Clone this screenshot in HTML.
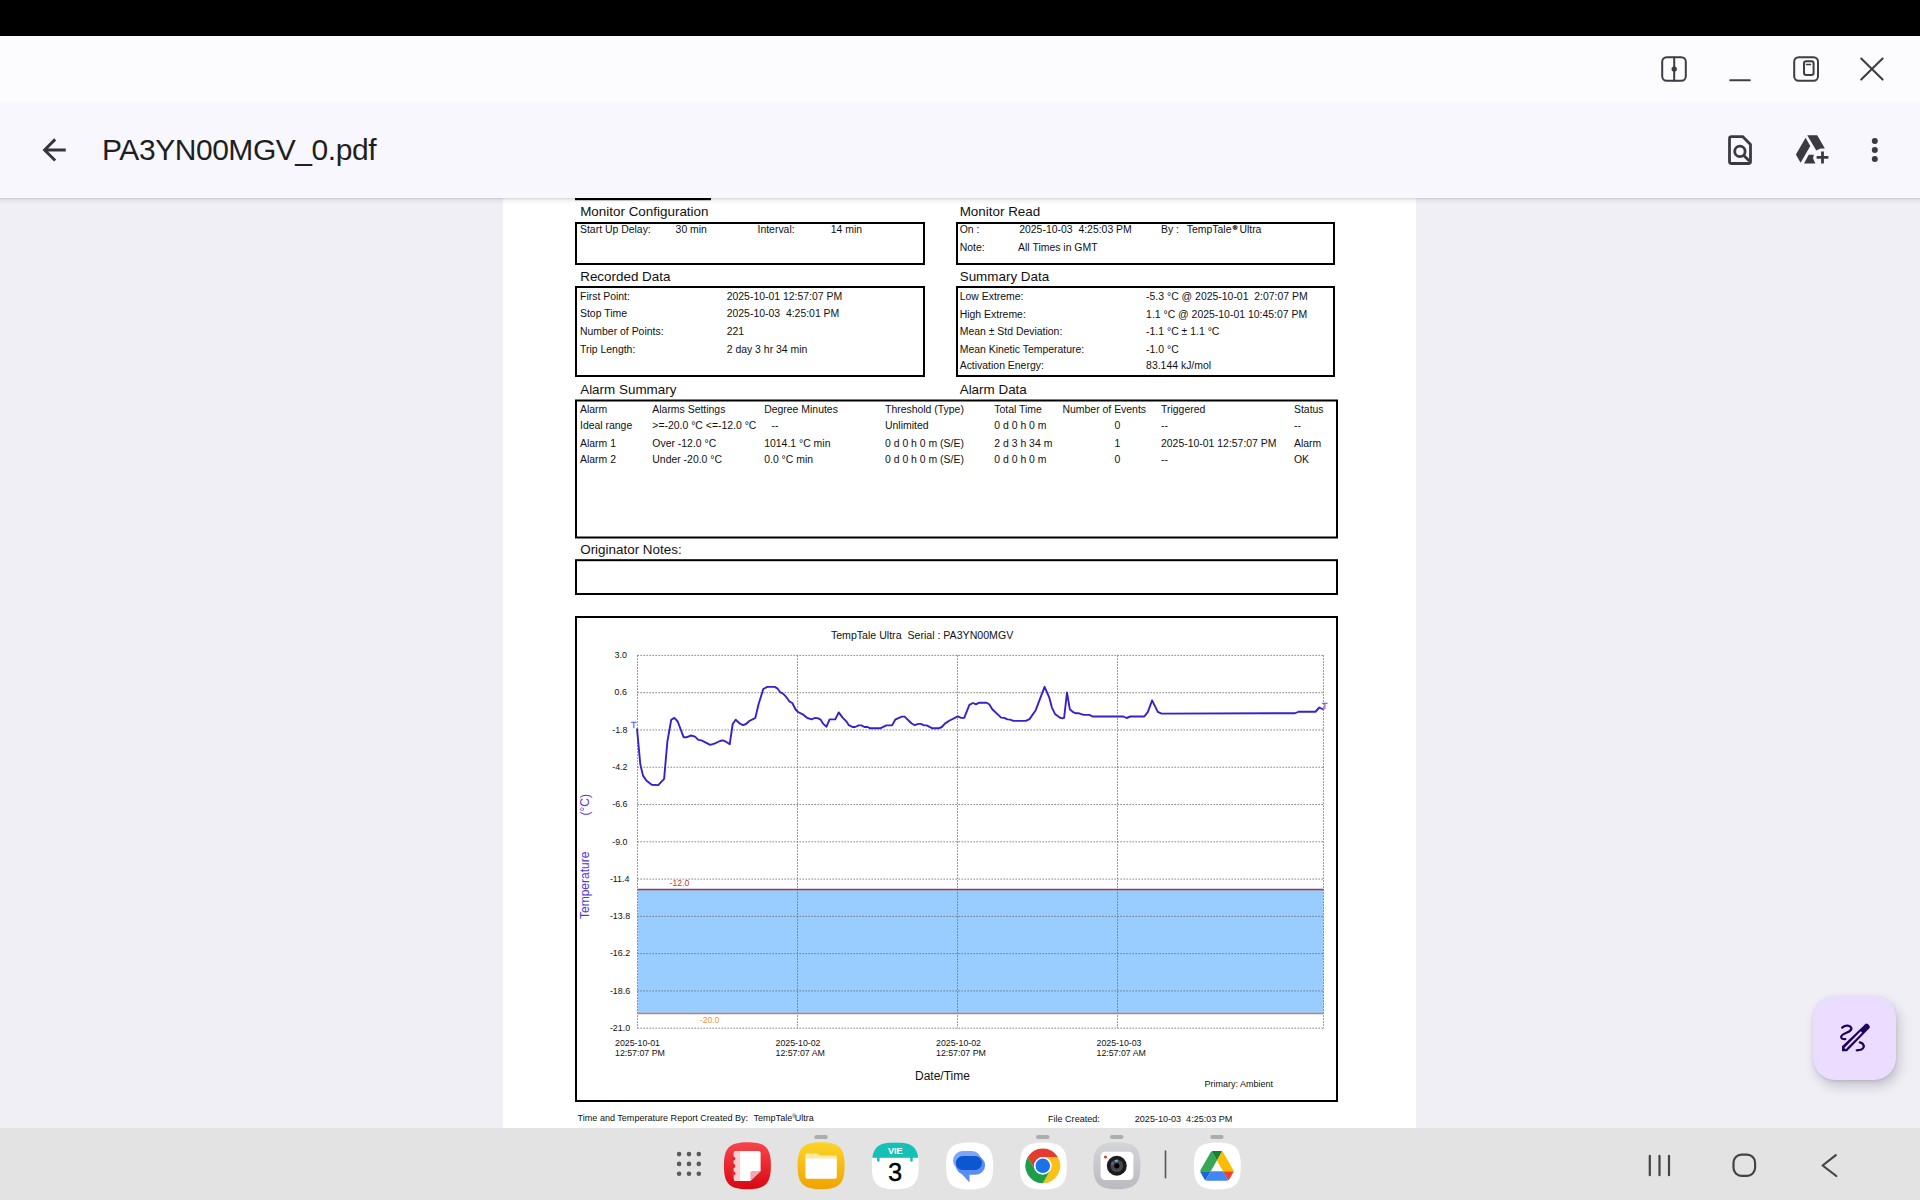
<!DOCTYPE html>
<html><head><meta charset="utf-8">
<style>
html,body{margin:0;padding:0;}
body{width:1920px;height:1200px;overflow:hidden;position:relative;background:#F0EFF5;font-family:"Liberation Sans",sans-serif;}
.abs{position:absolute;}
#status{left:0;top:0;width:1920px;height:36px;background:#000;}
#winbar{left:0;top:36px;width:1920px;height:66px;background:#FCFCFE;}
#appbar{left:0;top:102px;width:1920px;height:96px;background:#F8F7FD;}
#shadow{left:0;top:198px;width:1920px;height:6px;background:linear-gradient(rgba(50,50,70,0.20),rgba(50,50,70,0.07) 35%,rgba(50,50,70,0));}
#page{left:503px;top:198px;width:913px;height:930px;background:#fff;}
#taskbar{left:0;top:1128px;width:1920px;height:72px;background:#E3E3E3;}
#title{left:102px;top:133px;font-size:30px;line-height:normal;color:#1F1F1F;white-space:nowrap;letter-spacing:-0.45px;}
#fab{left:1813px;top:996px;width:83px;height:84px;border-radius:22px;background:#EADDFF;box-shadow:3px 6px 12px rgba(40,30,60,0.22),0 1px 3px rgba(0,0,0,0.10);}
svg{position:absolute;overflow:visible;}
</style></head>
<body>
<div id="status" class="abs"></div>
<div id="winbar" class="abs"></div>
<div id="appbar" class="abs"></div>
<div id="page" class="abs"></div>
<div id="shadow" class="abs"></div>
<div id="taskbar" class="abs"></div>
<div id="title" class="abs">PA3YN00MGV_0.pdf</div>
<div id="fab" class="abs"></div>
<svg class="abs" style="left:0;top:0" width="1920" height="1200" viewBox="0 0 1920 1200">
<g font-family='"Liberation Sans",sans-serif' fill="#111">
<rect x="575" y="198" width="136" height="2.2" fill="#000"/>
<text x="580.2" y="215.8" font-size="13.43"  xml:space="preserve">Monitor Configuration</text>
<text x="959.7" y="215.8" font-size="13.43"  xml:space="preserve">Monitor Read</text>
<text x="580.2" y="281" font-size="13.43"  xml:space="preserve">Recorded Data</text>
<text x="959.7" y="280.8" font-size="13.43"  xml:space="preserve">Summary Data</text>
<text x="580.2" y="394" font-size="13.43"  xml:space="preserve">Alarm Summary</text>
<text x="959.7" y="394" font-size="13.43"  xml:space="preserve">Alarm Data</text>
<text x="580.2" y="554" font-size="13.43"  xml:space="preserve">Originator Notes:</text>
<rect x="576" y="223" width="348" height="41" fill="none" stroke="#000" stroke-width="2"/>
<rect x="957" y="223" width="377" height="41" fill="none" stroke="#000" stroke-width="2"/>
<rect x="576" y="287" width="348" height="89" fill="none" stroke="#000" stroke-width="2"/>
<rect x="957" y="287" width="377" height="89" fill="none" stroke="#000" stroke-width="2"/>
<rect x="576" y="400.5" width="761" height="137" fill="none" stroke="#000" stroke-width="2"/>
<rect x="576" y="560.2" width="761" height="33.8" fill="none" stroke="#000" stroke-width="2"/>
<rect x="576" y="617" width="761" height="484" fill="none" stroke="#000" stroke-width="2"/>
<text x="580" y="233.3" font-size="10.45"  xml:space="preserve">Start Up Delay:</text>
<text x="675.6" y="233.3" font-size="10.45"  xml:space="preserve">30 min</text>
<text x="757.5" y="233.3" font-size="10.45"  xml:space="preserve">Interval:</text>
<text x="830.8" y="233.3" font-size="10.45"  xml:space="preserve">14 min</text>
<text x="959.7" y="233.3" font-size="10.45"  xml:space="preserve">On :</text>
<text x="1019.2" y="233.3" font-size="10.45"  xml:space="preserve">2025-10-03  4:25:03 PM</text>
<text x="1161" y="233.3" font-size="10.45"  xml:space="preserve">By :</text>
<text x="1186.8" y="233.3" font-size="10.45"  xml:space="preserve">TempTale</text>
<text x="1232.8" y="229.8" font-size="6.2" stroke="#111" stroke-width="0.3" xml:space="preserve">®</text>
<text x="1239.4" y="233.3" font-size="10.45"  xml:space="preserve">Ultra</text>
<text x="959.7" y="251.4" font-size="10.45"  xml:space="preserve">Note:</text>
<text x="1018.1" y="251.4" font-size="10.45"  xml:space="preserve">All Times in GMT</text>
<text x="580" y="300.2" font-size="10.45"  xml:space="preserve">First Point:</text>
<text x="726.7" y="300.2" font-size="10.45"  xml:space="preserve">2025-10-01 12:57:07 PM</text>
<text x="580" y="316.9" font-size="10.45"  xml:space="preserve">Stop Time</text>
<text x="726.7" y="316.9" font-size="10.45"  xml:space="preserve">2025-10-03  4:25:01 PM</text>
<text x="580" y="335" font-size="10.45"  xml:space="preserve">Number of Points:</text>
<text x="726.7" y="335" font-size="10.45"  xml:space="preserve">221</text>
<text x="580" y="353.3" font-size="10.45"  xml:space="preserve">Trip Length:</text>
<text x="726.7" y="353.3" font-size="10.45"  xml:space="preserve">2 day 3 hr 34 min</text>
<text x="959.7" y="300.4" font-size="10.45"  xml:space="preserve">Low Extreme:</text>
<text x="1146.1" y="300.4" font-size="10.45"  xml:space="preserve">-5.3 °C @ 2025-10-01  2:07:07 PM</text>
<text x="959.7" y="317.5" font-size="10.45"  xml:space="preserve">High Extreme:</text>
<text x="1146.1" y="317.5" font-size="10.45"  xml:space="preserve">1.1 °C @ 2025-10-01 10:45:07 PM</text>
<text x="959.7" y="335" font-size="10.45"  xml:space="preserve">Mean ± Std Deviation:</text>
<text x="1146.1" y="335" font-size="10.45"  xml:space="preserve">-1.1 °C ± 1.1 °C</text>
<text x="959.7" y="353" font-size="10.45"  xml:space="preserve">Mean Kinetic Temperature:</text>
<text x="1146.1" y="353" font-size="10.45"  xml:space="preserve">-1.0 °C</text>
<text x="959.7" y="368.9" font-size="10.45"  xml:space="preserve">Activation Energy:</text>
<text x="1146.1" y="368.9" font-size="10.45"  xml:space="preserve">83.144 kJ/mol</text>
<text x="580" y="413.3" font-size="10.45"  xml:space="preserve">Alarm</text>
<text x="652.3" y="413.3" font-size="10.45"  xml:space="preserve">Alarms Settings</text>
<text x="764.2" y="413.3" font-size="10.45"  xml:space="preserve">Degree Minutes</text>
<text x="885" y="413.3" font-size="10.45"  xml:space="preserve">Threshold (Type)</text>
<text x="994.3" y="413.3" font-size="10.45"  xml:space="preserve">Total Time</text>
<text x="1062.5" y="413.3" font-size="10.45"  xml:space="preserve">Number of Events</text>
<text x="1161" y="413.3" font-size="10.45"  xml:space="preserve">Triggered</text>
<text x="1294" y="413.3" font-size="10.45"  xml:space="preserve">Status</text>
<text x="580" y="429.4" font-size="10.45"  xml:space="preserve">Ideal range</text>
<text x="652.3" y="429.4" font-size="10.45"  xml:space="preserve">&gt;=-20.0 °C &lt;=-12.0 °C</text>
<text x="771.5" y="429.4" font-size="10.45"  xml:space="preserve">--</text>
<text x="885" y="429.4" font-size="10.45"  xml:space="preserve">Unlimited</text>
<text x="994.3" y="429.4" font-size="10.45"  xml:space="preserve">0 d 0 h 0 m</text>
<text x="1117.3" y="429.4" font-size="10.45" text-anchor="middle" xml:space="preserve">0</text>
<text x="1161" y="429.4" font-size="10.45"  xml:space="preserve">--</text>
<text x="1294" y="429.4" font-size="10.45"  xml:space="preserve">--</text>
<text x="580" y="447.1" font-size="10.45"  xml:space="preserve">Alarm 1</text>
<text x="652.3" y="447.1" font-size="10.45"  xml:space="preserve">Over -12.0 °C</text>
<text x="764.2" y="447.1" font-size="10.45"  xml:space="preserve">1014.1 °C min</text>
<text x="885" y="447.1" font-size="10.45"  xml:space="preserve">0 d 0 h 0 m (S/E)</text>
<text x="994.3" y="447.1" font-size="10.45"  xml:space="preserve">2 d 3 h 34 m</text>
<text x="1117.3" y="447.1" font-size="10.45" text-anchor="middle" xml:space="preserve">1</text>
<text x="1161" y="447.1" font-size="10.45"  xml:space="preserve">2025-10-01 12:57:07 PM</text>
<text x="1294" y="447.1" font-size="10.45"  xml:space="preserve">Alarm</text>
<text x="580" y="462.9" font-size="10.45"  xml:space="preserve">Alarm 2</text>
<text x="652.3" y="462.9" font-size="10.45"  xml:space="preserve">Under -20.0 °C</text>
<text x="764.2" y="462.9" font-size="10.45"  xml:space="preserve">0.0 °C min</text>
<text x="885" y="462.9" font-size="10.45"  xml:space="preserve">0 d 0 h 0 m (S/E)</text>
<text x="994.3" y="462.9" font-size="10.45"  xml:space="preserve">0 d 0 h 0 m</text>
<text x="1117.3" y="462.9" font-size="10.45" text-anchor="middle" xml:space="preserve">0</text>
<text x="1161" y="462.9" font-size="10.45"  xml:space="preserve">--</text>
<text x="1294" y="462.9" font-size="10.45"  xml:space="preserve">OK</text>
<text x="577.6" y="1121.2" font-size="9.05"  xml:space="preserve">Time and Temperature Report Created By:</text>
<text x="753.5" y="1121.2" font-size="9.05"  xml:space="preserve">TempTale</text>
<text x="792.2" y="1117.6" font-size="4.6"  xml:space="preserve">®</text>
<text x="794.8" y="1121.2" font-size="9.05"  xml:space="preserve">Ultra</text>
<text x="1048" y="1121.5" font-size="9.05"  xml:space="preserve">File Created:</text>
<text x="1134.8" y="1121.5" font-size="9.05"  xml:space="preserve">2025-10-03  4:25:03 PM</text>
<rect x="637.5" y="889.40" width="686.0" height="124.17" fill="#99CCFF"/>
<path d="M637.5 655.40H1323.5M637.5 692.68H1323.5M637.5 729.96H1323.5M637.5 767.24H1323.5M637.5 804.52H1323.5M637.5 841.80H1323.5M637.5 879.08H1323.5M637.5 916.36H1323.5M637.5 953.64H1323.5M637.5 990.92H1323.5M637.5 1028.20H1323.5M637.5 655.4V1028.2M797.5 655.4V1028.2M957.5 655.4V1028.2M1117.5 655.4V1028.2M1323.5 655.4V1028.2" stroke="#6a6a6a" stroke-width="1" stroke-dasharray="1.3 1.7" fill="none"/>
<path d="M637.5 889.40H1323.5" stroke="#A03848" stroke-width="1.5"/>
<path d="M637.5 1013.57H1323.5" stroke="#C88060" stroke-width="1.5"/>
<text x="669.6" y="886.4" font-size="8.6" fill="#C83040"  xml:space="preserve">-12.0</text>
<text x="699.8" y="1022.5" font-size="8.6" fill="#F09040"  xml:space="preserve">-20.0</text>
<text x="614.5" y="658.1" font-size="8.9"  xml:space="preserve">3.0</text>
<text x="614.5" y="695.38" font-size="8.9"  xml:space="preserve">0.6</text>
<text x="612.2" y="732.66" font-size="8.9"  xml:space="preserve">-1.8</text>
<text x="612.2" y="769.94" font-size="8.9"  xml:space="preserve">-4.2</text>
<text x="612.2" y="807.22" font-size="8.9"  xml:space="preserve">-6.6</text>
<text x="612.2" y="844.5" font-size="8.9"  xml:space="preserve">-9.0</text>
<text x="609.9" y="881.78" font-size="8.9"  xml:space="preserve">-11.4</text>
<text x="609.9" y="919.06" font-size="8.9"  xml:space="preserve">-13.8</text>
<text x="609.9" y="956.34" font-size="8.9"  xml:space="preserve">-16.2</text>
<text x="609.9" y="993.62" font-size="8.9"  xml:space="preserve">-18.6</text>
<text x="609.9" y="1030.9" font-size="8.9"  xml:space="preserve">-21.0</text>
<text x="830.9" y="639.1" font-size="10.6"  xml:space="preserve">TempTale Ultra  Serial : PA3YN00MGV</text>
<text x="615.0" y="1046.3" font-size="8.8"  xml:space="preserve">2025-10-01</text>
<text x="615.0" y="1056.3" font-size="8.8"  xml:space="preserve">12:57:07 PM</text>
<text x="775.5" y="1046.3" font-size="8.8"  xml:space="preserve">2025-10-02</text>
<text x="775.5" y="1056.3" font-size="8.8"  xml:space="preserve">12:57:07 AM</text>
<text x="936.0" y="1046.3" font-size="8.8"  xml:space="preserve">2025-10-02</text>
<text x="936.0" y="1056.3" font-size="8.8"  xml:space="preserve">12:57:07 PM</text>
<text x="1096.5" y="1046.3" font-size="8.8"  xml:space="preserve">2025-10-03</text>
<text x="1096.5" y="1056.3" font-size="8.8"  xml:space="preserve">12:57:07 AM</text>
<text x="915" y="1079.8" font-size="12"  xml:space="preserve">Date/Time</text>
<text x="1204.6" y="1086.5" font-size="9"  xml:space="preserve">Primary: Ambient</text>
<text transform="translate(588.9 919) rotate(-90)" font-size="12" fill="#5533DD">Temperature</text>
<text transform="translate(588.9 815.5) rotate(-90)" font-size="12" fill="#5533DD">(°C)</text>
<polyline points="637.0,728.5 640.3,764.3 643.0,775.6 646.3,780.5 651.7,784.8 658.2,785.1 664.1,778.9 667.4,741.5 671.2,719.8 674.4,717.9 677.7,721.5 683.6,737.2 686.9,737.2 691.2,735.5 695.0,736.6 698.3,739.9 701.5,740.4 710.2,744.8 714.5,743.7 720,741 722.7,740.3 725.3,741.3 729.7,744.3 732.7,724 735.7,719.7 740,723.7 743,725.1 746,724 749.3,721 752,719.7 755.3,718 758.7,703.7 763.3,689 767.3,686.9 774.7,686.9 777.3,688.3 780.3,692.3 782.7,693.3 786,696.7 789.3,701.3 792.3,703 795.3,709 798,712 803.3,714.7 807.3,718 811.7,719.3 814.7,718 817.6,718.1 820.7,719.7 823.3,723.9 826.5,726.7 829.6,719.4 835.3,719.4 838.7,712.4 842.6,717.6 846.3,721.3 848.9,725.2 852.5,727 855.1,727 858.75,725.4 861.4,725.4 864.5,727 867.6,727 870.2,728.3 880.1,728.3 886.4,725.4 892.1,725.4 895.2,719.7 898.3,718.1 902,716.6 904.6,716.6 911.4,723.3 914.7,725.2 918.3,723.9 920.9,723.9 924.1,725.4 926.7,725.4 932.4,728.3 938.6,728.3 941.8,727 944.9,723.6 949.6,720.5 957.9,716.3 961,717.9 964.2,717.9 969.4,704.8 973,703 975.9,704.3 978.75,702.8 986.6,702.8 989.2,704.3 992.3,709.3 1001.1,717.6 1004.3,717.9 1007.4,719.4 1010.2,719.6 1013.3,720.9 1025.8,720.9 1029.5,719.1 1035.7,710.2 1044.6,686.8 1049.3,697.7 1051.9,707.6 1055,713.9 1059.7,717.5 1062.3,718.3 1064.1,717.8 1067,692.5 1069.8,709.2 1072.7,711.8 1075.8,713.3 1079,713.3 1083.6,714.9 1089.4,714.9 1092.5,716.5 1123.4,716.5 1126.6,718 1130.2,716.5 1144.3,716.5 1147.9,711.8 1152.1,700.3 1157.8,711.8 1161.5,713.6 1295,713.25 1298.5,711.75 1315.5,711.75 1319.25,707.5 1323.5,709.5" fill="none" stroke="#3A20CC" stroke-width="1.9" stroke-linejoin="round"/>
<text x="631" y="727.8" font-size="8.8" fill="#7A66E0" stroke="#7A66E0" stroke-width="0.35" xml:space="preserve">T</text>
<text x="1322" y="708.6" font-size="8.8" fill="#7A66E0" stroke="#7A66E0" stroke-width="0.35" xml:space="preserve">T</text>
</g></svg>
<svg class="abs" style="left:0;top:0" width="1920" height="1200" viewBox="0 0 1920 1200">
<!-- window controls -->
<g fill="none" stroke="#3D3D43" stroke-width="2" stroke-linecap="round">
<rect x="1662.2" y="57.2" width="23.6" height="23.6" rx="4.5"/>
<path d="M1674.2 57.5V80.5"/>
<path d="M1730.2 80.2H1749.8"/>
<rect x="1794.2" y="57.2" width="23.8" height="23.6" rx="4.5"/>
<rect x="1804" y="61.2" width="9.6" height="13.8" rx="2.3"/>
<path d="M1806.4 64.5H1810.6" stroke-width="1.3"/>
<path d="M1861.2 58.5L1882.6 79.6M1882.6 58.5L1861.2 79.6" stroke-width="2.1"/>
</g>
<circle cx="1674.2" cy="69.1" r="2.7" fill="#3D3D43"/>
<!-- app bar -->
<path transform="translate(36.69 132.56) scale(1.453)" d="M20 11H7.83l5.59-5.59L12 4l-8 8 8 8 1.41-1.41L7.83 13H20v-2z" fill="#35363D"/>
<g fill="none" stroke="#3A3B42" stroke-width="2.8" stroke-linejoin="round">
<path d="M1742.6 136.6H1731.5Q1729.5 136.6 1729.5 138.6V161.5Q1729.5 163.5 1731.5 163.5H1748.5Q1750.5 163.5 1750.5 161.5V144.6Z"/>
<circle cx="1739.9" cy="151.4" r="5.2"/>
<path d="M1743.8 155.4L1749.4 161" stroke-linecap="butt"/>
</g>
<g fill="#3A3B42">
<polygon points="1805.6,137.7 1810.3,146.1 1800.6,162.7 1795.9,154.6"/>
<polygon points="1807.2,135.2 1817.2,135.2 1824.9,148.4 1820.5,148.6 1816.3,150.6"/>
<polygon points="1808.75,154.75 1813.9,154.75 1813.0,158.2 1815.3,163.6 1804,163.6"/>
<path d="M1816.6 157.4H1828.4M1822.5 151.6V163.6" stroke="#3A3B42" stroke-width="2.8"/>
<circle cx="1874.8" cy="141" r="3"/>
<circle cx="1874.8" cy="150" r="3"/>
<circle cx="1874.8" cy="158.9" r="3"/>
</g>
<!-- FAB icon -->
<g fill="#21005D">
<path d="M1842,1046.3 L1865.2,1024.2 Q1866.6,1023 1868,1024.2 L1869.4,1025.7 Q1870.5,1027 1869.3,1028.3 L1847,1051.3 L1842,1051.3 Z"/>
</g>
<path d="M1845.0 1048.6L1861.4 1032.0" stroke="#EADDFF" stroke-width="1.9"/>
<g fill="none" stroke="#21005D" stroke-width="2.25" stroke-linecap="round">
<path d="M1842.2 1027.6C1844.5 1025.3 1849 1024.5 1851 1027.3C1852.5 1030 1849 1031.8 1846.5 1032.8C1843.5 1034 1840.6 1035.4 1841.2 1037.6C1841.8 1039 1843.6 1039.2 1845.3 1039.1"/>
<path d="M1859.8 1042.4C1862.6 1043 1864.4 1045 1863.5 1047.4C1862.6 1049.6 1859.5 1050.3 1856.7 1050.3"/>
</g>
<!-- nav bar -->
<g fill="none" stroke="#444448" stroke-width="2.2" stroke-linecap="round" stroke-linejoin="round">
<path d="M1649.8 1155.8V1175.2M1659.5 1155.8V1175.2M1669 1155.8V1175.2"/>
<rect x="1733.5" y="1154.6" width="21.6" height="21.2" rx="8"/>
<path d="M1835.8 1155.2L1822.6 1165.5L1836.3 1176"/>
</g>
<!-- taskbar -->
<g fill="#5A5A5E">
<circle cx="679.1" cy="1154.1" r="2.3"/><circle cx="689" cy="1154.1" r="2.3"/><circle cx="698.8" cy="1154.1" r="2.3"/>
<circle cx="679.1" cy="1163.9" r="2.3"/><circle cx="689" cy="1163.9" r="2.3"/><circle cx="698.8" cy="1163.9" r="2.3"/>
<circle cx="679.1" cy="1173.7" r="2.3"/><circle cx="689" cy="1173.7" r="2.3"/><circle cx="698.8" cy="1173.7" r="2.3"/>
</g>
<g fill="#ADADAD">
<rect x="814.3" y="1135" width="13.5" height="4" rx="2"/>
<rect x="1036" y="1135" width="13.5" height="4" rx="2"/>
<rect x="1110" y="1135" width="13.5" height="4" rx="2"/>
<rect x="1210.2" y="1135" width="13.5" height="4" rx="2"/>
</g>
<path d="M1165.5 1150.5V1178.3" stroke="#555559" stroke-width="1.6"/>
<defs>
<path id="sq" d="M0 23.5C0 5.5 5.5 0 23.5 0S47 5.5 47 23.5 41.5 47 23.5 47 0 41.5 0 23.5Z"/>
<linearGradient id="gred" x1="0" y1="0" x2="0" y2="1"><stop offset="0" stop-color="#F8454C"/><stop offset="1" stop-color="#D80812"/></linearGradient>
<linearGradient id="gyel" x1="0" y1="0" x2="0" y2="1"><stop offset="0" stop-color="#FDD52A"/><stop offset="1" stop-color="#EFA300"/></linearGradient>
<linearGradient id="ggray" x1="0" y1="0" x2="0" y2="1"><stop offset="0" stop-color="#D3D5DA"/><stop offset="1" stop-color="#B9BBC1"/></linearGradient>
<clipPath id="cal"><use href="#sq"/></clipPath>
</defs>
<!-- notes -->
<g transform="translate(723.9 1142.2)">
<use href="#sq" fill="url(#gred)"/>
<path d="M11.9 8.8H34.7Q36.7 8.8 36.7 10.8V28.8L26.4 38.9H11.9Q9.9 38.9 9.9 36.9V10.8Q9.9 8.8 11.9 8.8Z" fill="#fff"/>
<path d="M9.9 10.8Q9.9 8.8 11.9 8.8H16.2V38.9H11.9Q9.9 38.9 9.9 36.9Z" fill="#FAD0D2"/>
<path d="M36.7 28.8L26.4 38.9V30.8Q26.4 28.8 28.4 28.8Z" fill="#F4A9AE"/>
<g fill="#E8252D"><circle cx="9.6" cy="16.4" r="1.9"/><circle cx="9.6" cy="23.8" r="1.9"/><circle cx="9.6" cy="31.1" r="1.9"/></g>
</g>
<!-- folder -->
<g transform="translate(797.6 1142.2)">
<use href="#sq" fill="url(#gyel)"/>
<path d="M7.8 12.6Q7.8 11.2 9.2 11.2H19.5L22 13.4H37.8Q39.2 13.4 39.2 14.8V18H7.8Z" fill="#FCEBA8"/>
<rect x="7.8" y="16.2" width="31.4" height="20.3" rx="1.6" fill="#fff"/>
</g>
<!-- calendar -->
<g transform="translate(871.8 1142.2)">
<use href="#sq" fill="#fff"/>
<g clip-path="url(#cal)"><rect x="0" y="0" width="47" height="15.6" fill="#16C0B7"/></g>
<rect x="5.3" y="13.5" width="2.5" height="6" rx="1.25" fill="#16C0B7"/><rect x="38.4" y="13.5" width="2.5" height="6" rx="1.25" fill="#16C0B7"/>
<text x="23.5" y="12.2" font-size="9.2" font-weight="bold" fill="#fff" text-anchor="middle" font-family="Liberation Sans">VIE</text>
<text x="23.3" y="38.7" font-size="25.5" fill="#000" stroke="#000" stroke-width="0.35" text-anchor="middle" font-family="Liberation Sans">3</text>
</g>
<!-- messages -->
<g transform="translate(946.1 1142.6)">
<use href="#sq" fill="#fff"/>
<rect x="6.9" y="8.5" width="28.5" height="19" rx="9.5" fill="#7DA6F6"/>
<rect x="9.7" y="13.3" width="29.3" height="18.8" rx="9.4" fill="#5B8DF3"/>
<path d="M10.8 26L23.4 30V39.8Z" fill="#5B8DF3"/>
<rect x="9.7" y="13.5" width="26.1" height="14" rx="7" fill="#0B57D0"/>
</g>
<!-- chrome -->
<g transform="translate(1019.9 1142.6)">
<use href="#sq" fill="#fff"/>
<g transform="translate(22.9 23.2)">
<path d="M-15.07 -8.70A17.4 17.4 0 0 1 15.07 -8.70L-0.00 -8.70A8.7 8.7 0 0 0 -7.53 4.35Z" fill="#E33B2E"/>
<path d="M15.07 -8.70A17.4 17.4 0 0 1 0.00 17.40L7.53 4.35A8.7 8.7 0 0 0 -0.00 -8.70Z" fill="#FBC116"/>
<path d="M0.00 17.40A17.4 17.4 0 0 1 -15.07 -8.70L-7.53 4.35A8.7 8.7 0 0 0 7.53 4.35Z" fill="#1E9E48"/>
<circle r="8.7" fill="#fff"/><circle r="7.3" fill="#1A73E8"/>
</g>
</g>
<!-- camera -->
<g transform="translate(1093.4 1142.2)">
<use href="#sq" fill="url(#ggray)"/>
<rect x="7.2" y="9.6" width="32.8" height="28.2" rx="4.5" fill="#fff"/>
<circle cx="23.4" cy="23.6" r="10" fill="#1B1B1D"/>
<circle cx="23.4" cy="23.6" r="6.3" fill="#48484E"/>
<path d="M21.56 19.06A4.9 4.9 0 0 1 24.42 18.81" stroke="#52B8CC" stroke-width="2.4" fill="none"/>
<path d="M18.57 22.75A4.9 4.9 0 0 1 19.76 20.32" stroke="#6C5C9E" stroke-width="2.4" fill="none"/>
<circle cx="23.4" cy="23.6" r="2.6" fill="#000"/>
<circle cx="12.1" cy="14.9" r="1.5" fill="#D8332C"/>
</g>
<!-- drive -->
<g transform="translate(1193.8 1142.6)">
<use href="#sq" fill="#fff"/>
<g transform="translate(6.5 8.4) scale(0.38)">
<path d="m6.6 66.85 3.85 6.65c.8 1.4 1.95 2.5 3.3 3.3l13.75-23.8h-27.5c0 1.55.4 3.1 1.2 4.5z" fill="#1967D2"/>
<path d="m43.65 25-13.75-23.8c-1.35.8-2.5 1.9-3.3 3.3l-25.4 44a9.06 9.06 0 0 0 -1.2 4.5h27.5z" fill="#34A853"/>
<path d="m73.55 76.8c1.35-.8 2.5-1.9 3.3-3.3l1.6-2.75 7.65-13.25c.8-1.4 1.2-2.95 1.2-4.5h-27.502l5.852 11.5z" fill="#EA4335"/>
<path d="m43.65 25 13.75-23.8c-1.35-.8-2.9-1.2-4.5-1.2h-18.5c-1.6 0-3.15.45-4.5 1.2z" fill="#188038"/>
<path d="m59.8 53h-32.3l-13.75 23.8c1.35.8 2.9 1.2 4.5 1.2h50.8c1.6 0 3.15-.45 4.5-1.2z" fill="#4285F4"/>
<path d="m73.4 26.5-12.7-22c-.8-1.4-1.95-2.5-3.3-3.3l-13.75 23.8 16.15 28h27.45c0-1.55-.4-3.1-1.2-4.5z" fill="#FBBC04"/>
</g>
</g>
</svg>

</body></html>
